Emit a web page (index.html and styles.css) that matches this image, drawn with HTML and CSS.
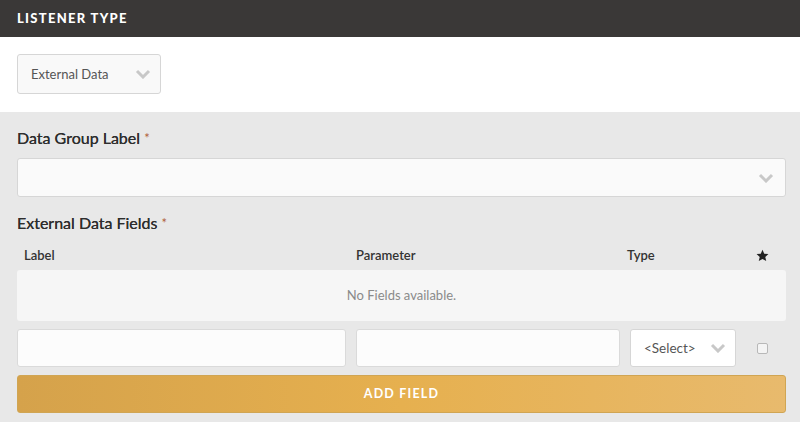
FILE: index.html
```html
<!DOCTYPE html>
<html>
<head>
<meta charset="utf-8">
<link rel="stylesheet" href="styles.css">
</head>
<body>
<div class="header">LISTENER TYPE</div>
<div class="type-section">
  <div class="select type-select"><span>External Data</span><svg class="chev" viewBox="0 0 16 10" width="16" height="10"><path d="M2 2 L8 8 L14 2" fill="none" stroke="#c8c8c8" stroke-width="3"/></svg></div>
</div>
<div class="main">
  <div class="label">Data Group Label <span class="req">*</span></div>
  <div class="select wide-select"><span></span><svg class="chev" viewBox="0 0 16 10" width="16" height="10"><path d="M2 2 L8 8 L14 2" fill="none" stroke="#c8c8c8" stroke-width="3"/></svg></div>
  <div class="label label2">External Data Fields <span class="req">*</span></div>
  <div class="cols">
    <div class="c1">Label</div>
    <div class="c2">Parameter</div>
    <div class="c3">Type</div>
    <div class="c4"><svg viewBox="0 0 24 24" width="13" height="13"><path d="M12 1.5l3.2 7.2 7.8.7-5.9 5.2 1.8 7.7L12 18.3l-6.9 4 1.8-7.7L1 9.4l7.8-.7z" fill="#222"/></svg></div>
  </div>
  <div class="empty">No Fields available.</div>
  <div class="row">
    <div class="input in1"></div>
    <div class="input in2"></div>
    <div class="select small-select"><span>&lt;Select&gt;</span><svg class="chev" viewBox="0 0 16 10" width="16" height="10"><path d="M2 2 L8 8 L14 2" fill="none" stroke="#c8c8c8" stroke-width="3"/></svg></div>
    <div class="chk-cell"><span class="chk"></span></div>
  </div>
  <div class="btn">ADD FIELD</div>
</div>
</body>
</html>
```
FILE: styles.css
```css
* { box-sizing: border-box; }
html, body { margin: 0; padding: 0; }
body {
  font-family: Lato, "Open Sans", sans-serif;
  background: #e8e8e8;
  color: #333;
  width: 800px;
  height: 422px;
  overflow: hidden;
}
.header {
  height: 37px;
  background: #3a3837;
  color: #fff;
  font-weight: 900;
  font-size: 13px;
  letter-spacing: 1.3px;
  padding-left: 17px;
  line-height: 37px;
}
.type-section {
  background: #fff;
  height: 75px;
  padding: 17px 17px 0;
}
.select {
  display: flex;
  align-items: center;
  justify-content: space-between;
  background: #f9f9f9;
  border: 1px solid #d6d6d6;
  border-radius: 3px;
  color: #555;
  font-size: 13px;
}
.type-select {
  width: 144px;
  height: 40px;
  padding: 0 9px 0 13px;
  background: #f9f9f9;
}
.chev { display: block; }
.main {
  padding: 15px 14px 0 17px;
}
.label {
  font-size: 16px;
  font-weight: 400;
  color: #2e2e2e;
  line-height: 22px;
  letter-spacing: 0;
  text-shadow: 0 0 0.4px #2e2e2e;
}
.label2 { margin-top: 15px; }
.req { color: #b0603a; font-size: 13px; vertical-align: top; text-shadow: none; }
.wide-select {
  height: 39px;
  margin-top: 9px;
  padding: 0 11px 0 13px;
  background: #fafafa;
}
.cols {
  display: flex;
  align-items: center;
  height: 24px;
  margin-top: 9px;
  font-size: 13px;
  color: #333;
  font-weight: 600;
}
.c1 { width: 339px; padding-left: 7px; }
.c2 { width: 271px; }
.c3 { width: 129px; }
.c4 { flex: 1; padding-left: 0; display: flex; align-items: center; }
.empty {
  height: 51px;
  margin-top: 3px;
  background: #f6f6f6;
  border-radius: 3px;
  text-align: center;
  line-height: 51px;
  font-size: 13px;
  color: #8a8a8a;
}
.row {
  display: flex;
  gap: 10px;
  margin-top: 8px;
  height: 38px;
}
.input {
  background: #fcfcfc;
  border: 1px solid #dadada;
  border-radius: 3px;
  height: 38px;
}
.in1 { width: 329px; }
.in2 { width: 264px; }
.small-select {
  width: 106px;
  height: 38px;
  padding: 0 9px 0 13px;
  background: #fff;
  font-size: 13.5px;
  color: #555;
}
.chk-cell { flex: 1; display: flex; align-items: center; padding-left: 11px; padding-top: 1px; }
.chk {
  width: 11px;
  height: 11px;
  border: 1px solid #b8b8b8;
  border-radius: 2px;
  background: #f4f4f4;
}
.btn {
  margin-top: 8px;
  height: 38px;
  border-radius: 3px;
  background: linear-gradient(to right, #d5a24b 0%, #e6b04f 50%, #e8ba6d 100%);
  border: 1px solid #d0a553;
  color: #fff;
  text-align: center;
  line-height: 36px;
  font-size: 12.5px;
  font-weight: 700;
  letter-spacing: 1.2px;
}
```
